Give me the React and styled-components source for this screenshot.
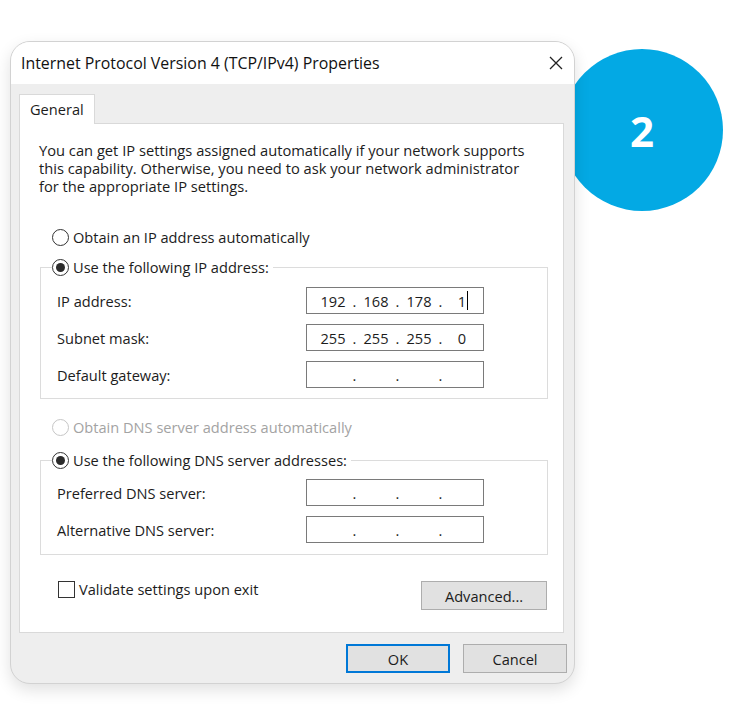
import React from "react";
import styled, { createGlobalStyle } from "styled-components";

const GlobalStyle = createGlobalStyle`
  body {
    margin: 0;
    background: #fff;
    font-family: "Open Sans", "Noto Sans", sans-serif;
    color: #1c1c1c;
  }
`;

const Stage = styled.div`
  position: relative;
  width: 741px;
  height: 708px;
  padding: 41px 0 0 10px;
  box-sizing: border-box;
  overflow: hidden;
`;

const Badge = styled.div`
  position: absolute;
  left: 561px;
  top: 49px;
  width: 162px;
  height: 162px;
  border-radius: 50%;
  background: #03a9e4;
  color: #fff;
  display: flex;
  align-items: center;
  justify-content: center;
  font: 700 42px "Open Sans", sans-serif;
`;

const Window = styled.div`
  position: relative;
  z-index: 1;
  width: 565px;
  height: 643px;
  box-sizing: border-box;
  border: 1px solid #d2d2d2;
  border-radius: 20px;
  background: #eeeeee;
  box-shadow: 0 6px 16px rgba(0, 0, 0, 0.12);
  overflow: hidden;
  display: flex;
  flex-direction: column;
`;

const TitleBar = styled.div`
  height: 41px;
  flex: none;
  background: #fff;
  display: flex;
  align-items: center;
  justify-content: space-between;
  padding: 0 11px 1px 10px;
  font-size: 15.9px;
  color: #111;
`;

const Body = styled.div`
  flex: 1;
  padding: 10px 10px 0 8px;
  display: flex;
  flex-direction: column;
`;

const TabStrip = styled.div`
  display: flex;
  position: relative;
  z-index: 1;
  margin-bottom: -1px;
`;

const Tab = styled.div`
  height: 30px;
  box-sizing: border-box;
  padding: 0 10px 1px;
  background: #fff;
  border: 1px solid #d9d9d9;
  border-bottom: none;
  display: flex;
  align-items: center;
  font-size: 14.6px;
`;

const Panel = styled.div`
  height: 510px;
  box-sizing: border-box;
  background: #fff;
  border: 1px solid #d9d9d9;
  padding: 17px 15px 0 19px;
  font-size: 14.6px;
`;

const Intro = styled.p`
  margin: 0;
  line-height: 18px;
  font-size: 14.7px;
`;

const Choice = styled.label`
  display: flex;
  align-items: center;
  gap: 4px;
  height: 18px;
  line-height: 18px;
  margin-left: ${(p) => p.$indent || 0}px;
  margin-top: ${(p) => p.$top || 0}px;
  color: ${(p) => (p.$disabled ? "#a3a3a3" : "inherit")};
`;

const Radio = styled.span`
  width: 17px;
  height: 17px;
  box-sizing: border-box;
  border-radius: 50%;
  border: 1px solid ${(p) => (p.$disabled ? "#c6c6c6" : "#333")};
  background: #fff;
  display: flex;
  align-items: center;
  justify-content: center;
  &::after {
    content: "";
    width: 9px;
    height: 9px;
    border-radius: 50%;
    background: ${(p) => (p.$checked ? "#2b2b2b" : "transparent")};
  }
`;

const Group = styled.fieldset`
  margin: ${(p) => p.$top}px 0 0 1px;
  border: 1px solid #dcdcdc;
  padding: ${(p) => p.$pt}px 63px ${(p) => p.$pb}px 11px;
  display: flex;
  flex-direction: column;
  gap: 10px;
`;

const Legend = styled.legend`
  padding: 0 4px 0 0;
  line-height: 18px;
`;

const FieldRow = styled.div`
  display: flex;
  align-items: center;
  justify-content: space-between;
  padding-left: 5px;
  height: 27px;
`;

const IpField = styled.div`
  width: 178px;
  height: 27px;
  box-sizing: border-box;
  border: 1px solid #7a7a7a;
  background: #fff;
  display: flex;
  align-items: center;
  padding-left: 9px;
  font-size: 14.6px;
`;

const Octet = styled.span`
  width: 34px;
  text-align: center;
  position: relative;
`;

const Dot = styled.span`
  width: 9px;
  text-align: center;
`;

const Caret = styled.span`
  position: absolute;
  top: 0;
  right: 11px;
  width: 1px;
  height: 19px;
  background: #000;
`;

const BottomRow = styled.div`
  display: flex;
  justify-content: space-between;
  align-items: flex-start;
  margin-top: 25px;
  padding: 0 1px 0 19px;
`;

const Check = styled.span`
  width: 17px;
  height: 17px;
  box-sizing: border-box;
  border: 1px solid #333;
  background: #fff;
`;

const Button = styled.button`
  width: ${(p) => p.$w}px;
  height: 29px;
  margin-top: ${(p) => p.$top || 0}px;
  box-sizing: border-box;
  background: #e1e1e1;
  border: ${(p) => (p.$primary ? "2px solid #0078d7" : "1px solid #adadad")};
  font: 14.6px "Open Sans", "Noto Sans", sans-serif;
  color: #1c1c1c;
  padding: 0;
`;

const Footer = styled.div`
  display: flex;
  justify-content: flex-end;
  gap: 13px;
  padding: 11px 0 0 0;
  margin-right: -3px;
`;

function CloseIcon() {
  return (
    <svg width="14" height="14" viewBox="0 0 14 14">
      <path d="M1 1L13 13M13 1L1 13" stroke="#222" strokeWidth="1.3" />
    </svg>
  );
}

function Address({ parts, caret }) {
  return (
    <IpField>
      {parts.map((p, i) => (
        <React.Fragment key={i}>
          <Octet>
            {p}
            {caret && i === 3 && <Caret />}
          </Octet>
          {i < 3 && <Dot>.</Dot>}
        </React.Fragment>
      ))}
    </IpField>
  );
}

const empty = ["", "", "", ""];

export default function App() {
  return (
    <Stage>
      <GlobalStyle />
      <Badge>2</Badge>
      <Window>
        <TitleBar>
          <span>Internet Protocol Version 4 (TCP/IPv4) Properties</span>
          <CloseIcon />
        </TitleBar>
        <Body>
          <TabStrip>
            <Tab>General</Tab>
          </TabStrip>
          <Panel>
            <Intro>
              You can get IP settings assigned automatically if your network supports
              <br />
              this capability. Otherwise, you need to ask your network administrator
              <br />
              for the appropriate IP settings.
            </Intro>

            <Choice $indent={13} $top={33}>
              <Radio />
              Obtain an IP address automatically
            </Choice>

            <Group $top={12} $pt={11} $pb={10}>
              <Legend>
                <Choice>
                  <Radio $checked />
                  Use the following IP address:
                </Choice>
              </Legend>
              <FieldRow>
                <span>IP address:</span>
                <Address parts={["192", "168", "178", "1"]} caret />
              </FieldRow>
              <FieldRow>
                <span>Subnet mask:</span>
                <Address parts={["255", "255", "255", "0"]} />
              </FieldRow>
              <FieldRow>
                <span>Default gateway:</span>
                <Address parts={empty} />
              </FieldRow>
            </Group>

            <Choice $indent={13} $top={19} $disabled>
              <Radio $disabled />
              Obtain DNS server address automatically
            </Choice>

            <Group $top={15} $pt={10} $pb={11}>
              <Legend>
                <Choice>
                  <Radio $checked />
                  Use the following DNS server addresses:
                </Choice>
              </Legend>
              <FieldRow>
                <span>Preferred DNS server:</span>
                <Address parts={empty} />
              </FieldRow>
              <FieldRow>
                <span>Alternative DNS server:</span>
                <Address parts={empty} />
              </FieldRow>
            </Group>

            <BottomRow>
              <Choice>
                <Check />
                Validate settings upon exit
              </Choice>
              <Button $w={126} $top={1}>Advanced...</Button>
            </BottomRow>
          </Panel>
          <Footer>
            <Button $w={104} $primary>OK</Button>
            <Button $w={104}>Cancel</Button>
          </Footer>
        </Body>
      </Window>
    </Stage>
  );
}
